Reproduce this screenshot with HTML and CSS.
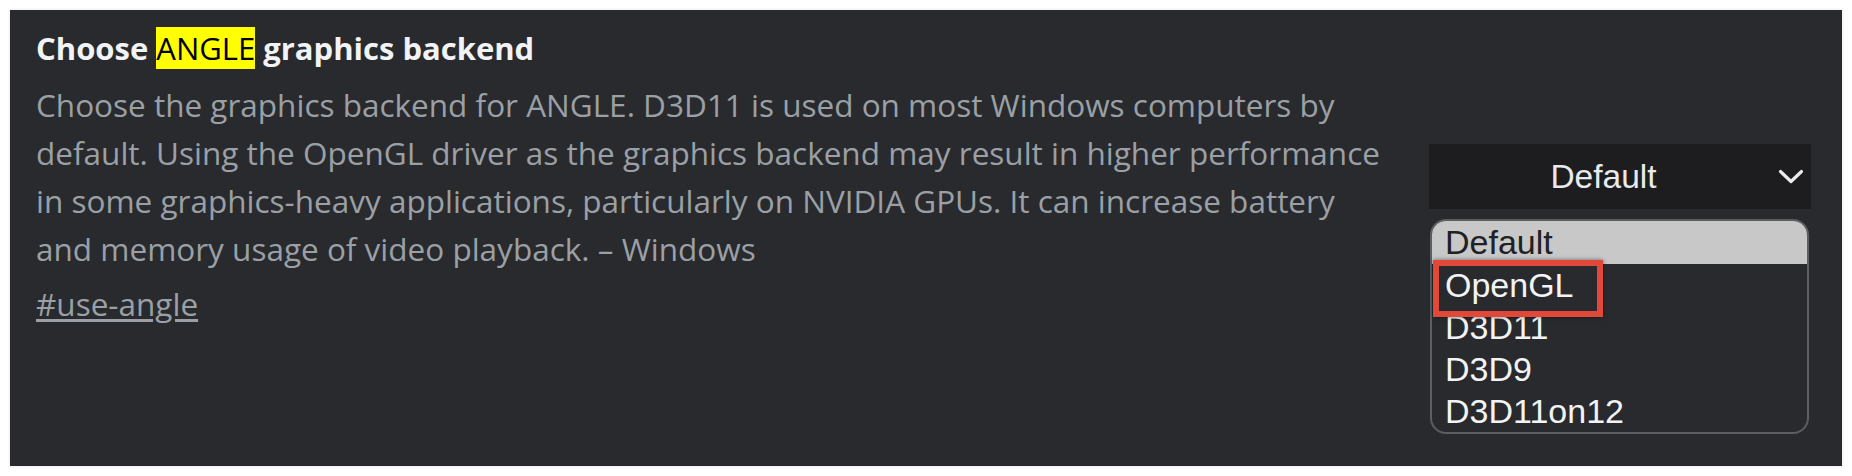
FILE: index.html
```html
<!DOCTYPE html>
<html>
<head>
<meta charset="utf-8">
<link rel="stylesheet" href="styles.css">
</head>
<body>
<div class="panel">
  <div class="info">
    <h1 class="title">Choose <mark class="hl">ANGLE</mark> graphics backend</h1>
    <p class="desc">Choose the graphics backend for ANGLE. D3D11 is used on most Windows computers by<br>default. Using the OpenGL driver as the graphics backend may result in higher performance<br>in some graphics-heavy applications, particularly on NVIDIA GPUs. It can increase battery<br>and memory usage of video playback. – Windows</p>
    <a class="link" href="#use-angle">#use-angle</a>
  </div>
  <div class="control">
    <div class="select">
      <span class="select-value">Default</span>
      <svg class="chevron" width="26" height="16" viewBox="0 0 26 16"><path d="M2.5 2.5 L13 12.5 L23.5 2.5" fill="none" stroke="#e8eaed" stroke-width="3.2" stroke-linecap="round" stroke-linejoin="round"/></svg>
    </div>
    <ul class="options">
      <li class="opt opt-selected">Default</li>
      <li class="opt">OpenGL</li>
      <li class="opt">D3D11</li>
      <li class="opt">D3D9</li>
      <li class="opt">D3D11on12</li>
    </ul>
    <div class="callout"></div>
  </div>
</div>
</body>
</html>
```
FILE: styles.css
```css
* { box-sizing: border-box; }
html, body { margin: 0; padding: 0; background: #ffffff; }
body { width: 1852px; height: 476px; overflow: hidden; }
.panel {
  margin: 10px;
  width: 1832px;
  height: 456px;
  background: #292a2d;
  display: flex;
  justify-content: space-between;
  padding: 0 31px 0 26px;
  font-family: "Open Sans", sans-serif;
  box-shadow: 0 0 3px rgba(0,0,0,0.12);
}
.info { padding-top: 16px; }
.title {
  margin: 0;
  font-size: 31px;
  font-weight: 700;
  color: #f1f3f4;
  line-height: 44px;
}
.hl { background: #ffff00; color: #000; font-weight: 400; }
.desc {
  margin: 11px 0 0;
  font-size: 31.5px;
  line-height: 48px;
  color: #9aa0a6;
  white-space: nowrap;
}
.link {
  display: inline-block;
  margin-top: 7px;
  font-size: 31.5px;
  line-height: 48px;
  color: #9aa0a6;
  text-decoration: underline;
  text-underline-offset: 3px;
}
.control {
  width: 382px;
  padding-top: 134px;
  position: relative;
  font-family: "Liberation Sans", Arial, sans-serif;
}
.select {
  height: 65px;
  background: #1d1d1f;
  display: flex;
  align-items: center;
  padding: 0 7px 0 0;
}
.select-value {
  flex: 1;
  text-align: center;
  font-size: 33.5px;
  color: #e8eaed;
}
.chevron { display: block; }
.options {
  list-style: none;
  margin: 10px 2px 0 1px;
  padding: 0;
  border: 2px solid #5c5e62;
  border-radius: 16px;
  overflow: hidden;
  background: #292a2d;
}
.opt {
  height: 42px;
  line-height: 42px;
  font-size: 34px;
  color: #f1f3f4;
  padding-left: 13px;
}
.opt-selected { background: #c8c8c8; color: #202124; height: 43px; line-height: 43px; }
.callout {
  position: absolute;
  left: 4px;
  top: 250px;
  width: 170px;
  height: 57px;
  border: 6px solid #e0483a;
  box-shadow: 0 0 4px rgba(0,0,0,0.5);
}
```
